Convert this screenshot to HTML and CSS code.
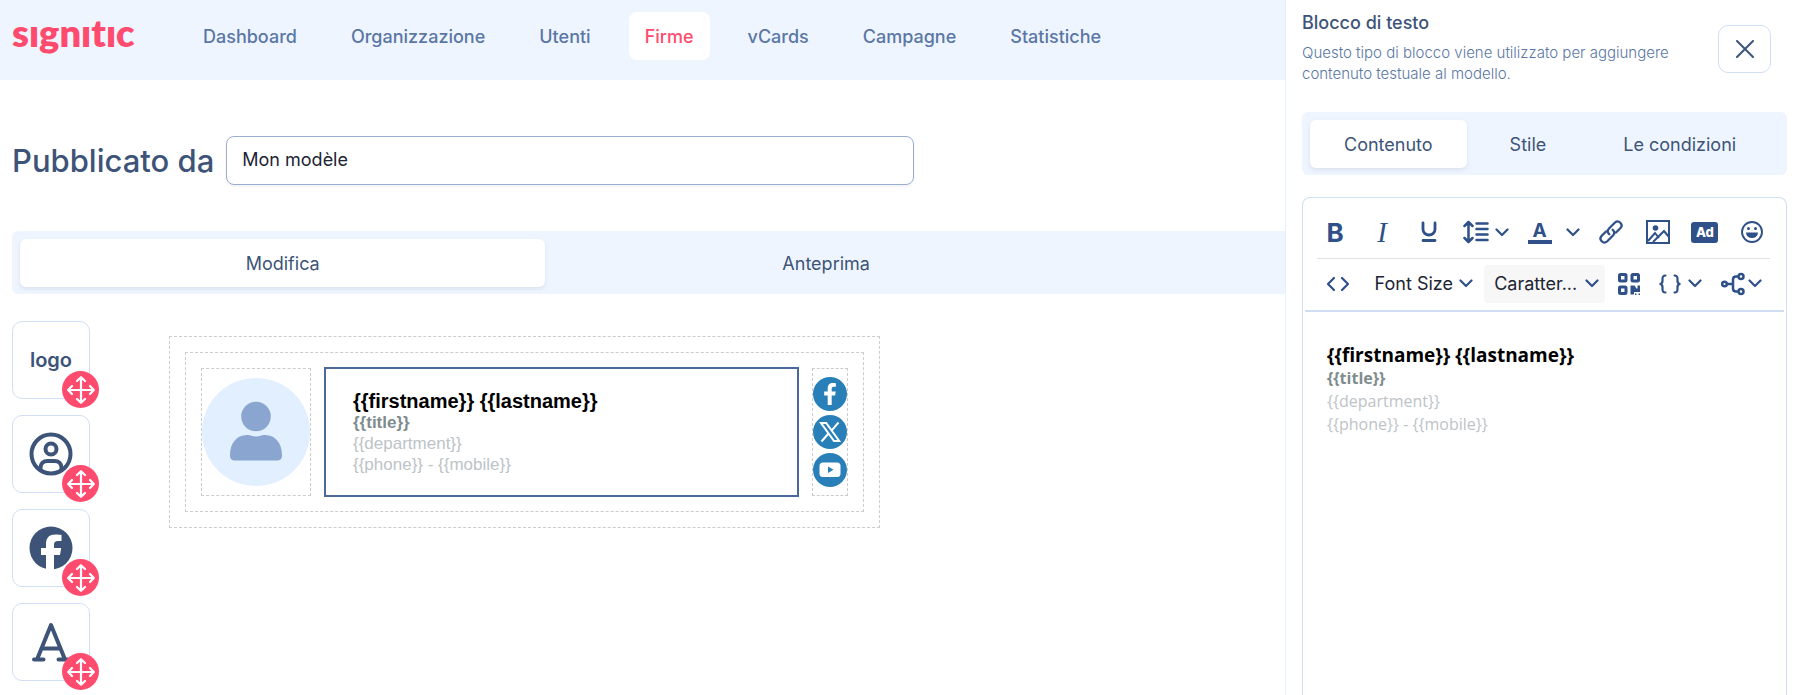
FILE: index.html
```
<!DOCTYPE html>
<html lang="it">
<head>
  <meta charset="UTF-8">
  <meta name="viewport" content="width=device-width, initial-scale=1">
  <title>Signitic - Firme</title>
  <link rel="stylesheet" href="styles.css">
</head>
<body>
  <!-- shared icons -->
  <svg class="sprite" aria-hidden="true">
    <symbol id="chevron" viewBox="0 0 14 9">
      <path d="M1.5 1.5 7 7l5.500-5.500" fill="none" stroke="currentColor" stroke-width="2.200" stroke-linecap="round" stroke-linejoin="round"/>
    </symbol>
    <symbol id="move" viewBox="0 0 28 28">
      <path d="M14 1.500v25M1.500 14h25M10 5l4-3.800L18 5M10 23l4 3.800 4-3.800M5 10l-3.800 4L5 18M23 10l3.800 4-3.800 4" fill="none" stroke="currentColor" stroke-width="2.200" stroke-linecap="round" stroke-linejoin="round"/>
    </symbol>
  </svg>

  <div class="app">
    <div class="page">
      <header class="topbar">
        <a href="#" class="logo" aria-label="signitic">sıgnıtıc</a>
        <nav class="nav">
          <a href="#">Dashboard</a>
          <a href="#">Organizzazione</a>
          <a href="#">Utenti</a>
          <a href="#" class="active">Firme</a>
          <a href="#">vCards</a>
          <a href="#">Campagne</a>
          <a href="#">Statistiche</a>
        </nav>
      </header>

      <main class="main">
        <div class="title-row">
          <label for="modelName">Pubblicato da</label>
          <input type="text" id="modelName" value="Mon modèle">
        </div>

        <div class="tabs main-tabs">
          <button type="button" class="tab active">Modifica</button>
          <button type="button" class="tab">Anteprima</button>
        </div>

        <div class="workspace">
          <div class="blocks">
            <button type="button" class="block">
              <span>logo</span>
              <span class="badge"><svg><use href="#move"/></svg></span>
            </button>
            <button type="button" class="block" aria-label="Foto">
              <svg class="block-icon" viewBox="0 0 44 44" fill="none" stroke="currentColor" stroke-width="4">
                <circle cx="22" cy="22" r="19.500"/>
                <circle cx="22" cy="17" r="5.500"/>
                <path d="M11.500 38v-2c0-4.500 3-7 7-7h7c4 0 7 2.500 7 7v2"/>
              </svg>
              <span class="badge"><svg><use href="#move"/></svg></span>
            </button>
            <button type="button" class="block" aria-label="Social">
              <svg class="block-icon" viewBox="0 0 44 44">
                <circle cx="22" cy="22" r="21.500" fill="currentColor"/>
                <path d="M17 44V29h-5v-7h5v-4c0-6.500 3.500-9.500 9.500-9.500 2.500 0 4.500.2 6 .5v6h-3.500c-3 0-4 1.300-4 3.500V22h7.200l-1.200 7h-6v15z" fill="#fff"/>
              </svg>
              <span class="badge"><svg><use href="#move"/></svg></span>
            </button>
            <button type="button" class="block" aria-label="Testo">
              <svg class="block-icon" viewBox="0 0 44 44" fill="none" stroke="currentColor" stroke-width="4" stroke-linecap="round" stroke-linejoin="round">
                <path d="M8 39.500 22 5l14 34.500M12.500 28.500h19M5 39.500h9.500M29.500 39.500H39"/>
              </svg>
              <span class="badge"><svg><use href="#move"/></svg></span>
            </button>
          </div>

          <div class="canvas">
            <div class="canvas-row">
              <div class="cell avatar">
                <svg viewBox="0 0 108 108">
                  <circle cx="54" cy="54" r="54" fill="#e1efff"/>
                  <circle cx="54" cy="38.500" r="14.800" fill="#8aa6d0"/>
                  <path d="M28 77c0-11 6-20 17-20 4 0 5 1.500 9 1.500s5-1.500 9-1.500c11 0 17 9 17 20 0 4-1.500 5.500-5.500 5.500h-41C29.500 82.500 28 81 28 77z" fill="#8aa6d0"/>
                </svg>
              </div>
              <div class="cell text-cell signature">
                <p class="name">{{firstname}} {{lastname}}</p>
                <p class="job">{{title}}</p>
                <p>{{department}}</p>
                <p>{{phone}} - {{mobile}}</p>
              </div>
              <div class="cell social">
                <svg viewBox="0 0 34 34">
                  <circle cx="17" cy="17" r="17" fill="#2980b9"/>
                  <path d="M14.700 28V18.500h-3.500v-4h3.500v-3c0-3.700 2-5.500 5.200-5.500 1.200 0 2.200.1 3 .3v3.500h-2c-1.700 0-2.200.8-2.200 2.200v2.500h4l-.6 4h-3.400V28z" fill="#fff"/>
                </svg>
                <svg viewBox="0 0 34 34">
                  <circle cx="17" cy="17" r="17" fill="#2980b9"/>
                  <path d="M8 8h5.200l13 18H21zM25.500 7.500 18.500 15.700M15.500 18.500 8.500 26.500" fill="none" stroke="#fff" stroke-width="2"/>
                </svg>
                <svg viewBox="0 0 34 34">
                  <circle cx="17" cy="17" r="17" fill="#2980b9"/>
                  <rect x="6.500" y="9.500" width="21" height="14.500" rx="3.500" fill="#fff"/>
                  <path d="m15 13.500 5.500 3.200L15 20z" fill="#2980b9"/>
                </svg>
              </div>
            </div>
          </div>
        </div>
      </main>
    </div>

    <aside class="panel">
      <div class="panel-head">
        <div class="panel-intro">
          <h2>Blocco di testo</h2>
          <p>Questo tipo di blocco viene utilizzato per aggiungere contenuto testuale al modello.</p>
        </div>
        <button type="button" class="close" aria-label="Chiudi">
          <svg viewBox="0 0 18 18"><path d="m1 1 16 16M17 1 1 17" stroke="currentColor" stroke-width="2" stroke-linecap="round"/></svg>
        </button>
      </div>

      <div class="tabs panel-tabs">
        <button type="button" class="tab active">Contenuto</button>
        <button type="button" class="tab">Stile</button>
        <button type="button" class="tab">Le condizioni</button>
      </div>

      <div class="editor">
        <div class="toolbar">
          <div class="tools">
            <button type="button" class="bold" aria-label="Grassetto">B</button>
            <button type="button" class="italic" aria-label="Corsivo">I</button>
            <button type="button" aria-label="Sottolineato">
              <svg class="ico" viewBox="0 0 24 24" fill="none" stroke="currentColor" stroke-width="2.800" stroke-linecap="round"><path d="M6 3v6.500a6 5.500 0 0 0 12 0V3M6 20.500h12"/></svg>
            </button>
            <button type="button" class="wide" aria-label="Interlinea">
              <svg class="ico line-ico" viewBox="0 0 26 24" fill="none" stroke="currentColor" stroke-width="2.500" stroke-linecap="round" stroke-linejoin="round"><path d="M5.500 3v18M1.500 6l4-4 4 4M1.500 18l4 4 4-4M13.500 3.500h11M13.500 9h11M13.500 14.500h11M13.500 20h11"/></svg>
              <svg class="chev"><use href="#chevron"/></svg>
            </button>
            <button type="button" class="wide color" aria-label="Colore">
              <span class="color-letter">A</span>
              <svg class="chev"><use href="#chevron"/></svg>
            </button>
            <button type="button" aria-label="Link">
              <svg class="ico" viewBox="0 0 24 24" fill="none" stroke="currentColor" stroke-width="2.300" stroke-linecap="round"><path d="M10.300 14.300c-2-2-1.800-4.300-.3-5.800l6-6a3.900 3.900 0 0 1 5.500 5.500L17 12.500M13.700 9.700c2 2 1.800 4.300.3 5.800l-6 6A3.900 3.900 0 0 1 2.500 16L7 11.500"/></svg>
            </button>
            <button type="button" aria-label="Immagine">
              <svg class="ico" viewBox="0 0 24 24" fill="none" stroke="currentColor" stroke-width="2"><path d="M1 1h22v22H1zM2 21l7-8 4 5M7 22l11-11 5 6"/><circle cx="9.500" cy="8" r="2.800" fill="currentColor" stroke="none"/></svg>
            </button>
            <button type="button" aria-label="Banner"><span class="ad">Ad</span></button>
            <button type="button" aria-label="Emoji">
              <svg class="ico" viewBox="0 0 24 24"><circle cx="12" cy="12" r="10" fill="none" stroke="currentColor" stroke-width="1.900"/><circle cx="8.500" cy="8.500" r="1.500" fill="currentColor"/><circle cx="15.500" cy="8.500" r="1.500" fill="currentColor"/><path d="M6 12.500h12a6 5.500 0 0 1-12 0z" fill="currentColor"/></svg>
            </button>
          </div>
          <div class="tools">
            <button type="button" class="code" aria-label="Codice">
              <svg class="ico" viewBox="0 0 24 24" fill="none" stroke="currentColor" stroke-width="2.200" stroke-linecap="round" stroke-linejoin="round"><path d="m8 6-6 6 6 6M16 6l6 6-6 6"/></svg>
            </button>
            <div class="select size">
              <select aria-label="Dimensione"><option>Font Size</option></select>
              <svg class="chev"><use href="#chevron"/></svg>
            </div>
            <div class="select family">
              <select aria-label="Carattere"><option>Caratter...</option></select>
              <svg class="chev"><use href="#chevron"/></svg>
            </div>
            <button type="button" aria-label="QR code">
              <svg class="ico" viewBox="0 0 24 24"><g fill="none" stroke="currentColor" stroke-width="3"><rect x="2.500" y="2.500" width="6.500" height="6.500" rx="1"/><rect x="15" y="2.500" width="6.500" height="6.500" rx="1"/><rect x="2.500" y="15" width="6.500" height="6.500" rx="1"/></g><path d="M13.500 13.500h4l2 3h1v-3H23V20h-6v2.500h-3.500zM18 21.500h1.500V23H18zM21.500 21.500H23V23h-1.500z" fill="currentColor"/></svg>
            </button>
            <button type="button" class="wide" aria-label="Variabili">
              <svg class="ico" viewBox="0 0 24 24" fill="none" stroke="currentColor" stroke-width="2.200" stroke-linecap="round"><path d="M7.500 3.500C5 3.500 4.500 4.500 4.500 7v2c0 2-.5 3-3 3 2.500 0 3 1 3 3v2c0 2.500.5 3.500 3 3.500M16.500 3.500c2.500 0 3 1 3 3.500v2c0 2 .5 3 3 3-2.500 0-3 1-3 3v2c0 2.500-.5 3.500-3 3.500"/></svg>
              <svg class="chev"><use href="#chevron"/></svg>
            </button>
            <button type="button" class="wide branch" aria-label="Condizioni">
              <svg class="ico" viewBox="0 0 24 24" fill="none" stroke="currentColor" stroke-width="2.500"><circle cx="3.500" cy="12" r="2.300"/><circle cx="20" cy="4.500" r="2.500"/><circle cx="20" cy="19.500" r="2.500"/><path d="M6 12h6M17.500 4.500H15c-2 0-3 1-3 3v9c0 2 1 3 3 3h2.500"/></svg>
              <svg class="chev"><use href="#chevron"/></svg>
            </button>
          </div>
        </div>
        <div class="editor-body signature" contenteditable="true" spellcheck="false">
          <p class="name">{{firstname}} {{lastname}}</p>
          <p class="job">{{title}}</p>
          <p>{{department}}</p>
          <p>{{phone}} - {{mobile}}</p>
        </div>
      </div>
    </aside>
  </div>
</body>
</html>
```
FILE: styles.css
```
* {
  box-sizing: border-box;
}

body {
  margin: 0;
  font-family: Inter, "Liberation Sans", sans-serif;
  font-size: 18px;
  color: #3d5478;
  background: #fff;
}

h2, p {
  margin: 0;
}

a {
  color: inherit;
  text-decoration: none;
}

button, input, select {
  font: inherit;
  color: inherit;
}

button {
  padding: 0;
  border: none;
  background: none;
  cursor: pointer;
}

.sprite {
  display: none;
}

.app {
  display: flex;
  height: 100vh;
  overflow: hidden;
}

.page {
  flex: 1;
  min-width: 0;
}

/* header */
.topbar {
  display: flex;
  align-items: flex-start;
  height: 80px;
  padding: 12px;
  background: #eff5ff;
}

.logo {
  width: 175px;
  font-family: Lato, sans-serif;
  font-size: 38px;
  line-height: 40px;
  font-weight: 800;
  font-variant-ligatures: none;
  color: #ff4b6e;
}

.nav {
  display: flex;
  gap: 22px;
}

.nav a {
  padding: 1px 16px 0;
  line-height: 47px;
  font-weight: 500;
  color: #5a77a5;
  border-radius: 8px;
}

.nav a.active {
  color: #ff4b6e;
  background: #fff;
}

.main {
  padding: 56px 0 0 12px;
}

.title-row {
  display: flex;
  align-items: center;
  gap: 12px;
}

.title-row label {
  font-size: 31px;
  font-weight: 500;
}

.title-row input {
  width: 54%;
  height: 49px;
  padding: 0 15px 2px;
  border: 1px solid #9aaed3;
  border-radius: 8px;
  color: #1d2433;
  box-shadow: 0 2px 3px rgba(0, 0, 0, 0.05);
}

/* tabs */
.tabs {
  display: flex;
  gap: 18px;
  margin-top: 46px;
  padding: 8px 8px 7px;
  background: #eff5ff;
  border-radius: 6px;
}

.main-tabs {
  border-radius: 6px 0 0 6px;
}

.tab {
  flex: 0 0 41.8%;
  height: 48px;
  border-radius: 6px;
}

.tab.active {
  background: #fff;
  box-shadow: 0 2px 4px rgba(61, 84, 120, 0.12);
}

/* workspace */
.workspace {
  display: flex;
  align-items: flex-start;
  gap: 79px;
  margin-top: 27px;
}

.blocks {
  display: flex;
  flex-direction: column;
  gap: 16px;
}

.block {
  position: relative;
  display: flex;
  align-items: center;
  justify-content: center;
  width: 78px;
  height: 78px;
  border: 1px solid #d0dff5;
  border-radius: 10px;
  font-size: 20px;
  font-weight: 600;
}

.block-icon {
  width: 44px;
  height: 44px;
}

.badge {
  position: absolute;
  right: -10px;
  bottom: -10px;
  display: flex;
  align-items: center;
  justify-content: center;
  width: 37px;
  height: 37px;
  border-radius: 50%;
  color: #fff;
  background: #ff4b6e;
}

.badge svg {
  width: 28px;
  height: 28px;
}

.canvas {
  width: 711px;
  margin-top: 15px;
  padding: 15px;
  border: 1px dashed #ccc;
}

.canvas-row {
  display: flex;
  gap: 14px;
  padding: 15px;
  border: 1px dashed #ccc;
}

.cell {
  height: 128px;
  border: 1px dashed #ccc;
}

.avatar {
  display: flex;
  align-items: center;
  width: 110px;
}

.avatar svg {
  width: 108px;
  height: 108px;
}

.text-cell {
  flex: 1;
  padding: 21px 27px;
  border: 1px solid #4a6899;
  outline: 1px solid #4a6899;
  font-family: "Liberation Sans", Arial, sans-serif;
  line-height: 21px;
}

.signature {
  color: #bdc3c7;
}

.signature .name {
  color: #000;
  font-weight: bold;
}

.signature .job {
  color: #7f8c8d;
  font-weight: bold;
}

.text-cell p {
  font-size: 17px;
}

.text-cell .name {
  font-size: 20px;
  line-height: 22px;
}

.social {
  display: flex;
  flex-direction: column;
  align-items: center;
  justify-content: center;
  gap: 4px;
  width: 36px;
}

.social svg {
  width: 34px;
  height: 34px;
}

/* side panel */
.panel {
  display: flex;
  flex-direction: column;
  width: 514px;
  padding: 11px 12px 0 16px;
  border-left: 1px solid #e6effc;
}

.panel-head {
  display: flex;
  justify-content: space-between;
  padding-right: 16px;
}

.panel-intro {
  width: 380px;
}

.panel h2 {
  font-size: 18px;
  line-height: 24px;
  font-weight: 500;
}

.panel-intro p {
  margin-top: 7px;
  font-size: 15px;
  line-height: 21px;
  font-weight: 300;
  color: #5a77a5;
}

.close {
  width: 53px;
  height: 48px;
  margin-top: 14px;
  border: 1px solid #d0dff5;
  border-radius: 10px;
}

.close svg {
  display: block;
  width: 18px;
  height: 18px;
  margin: 0 auto;
}

.panel-tabs {
  gap: 9px;
  margin-top: 28px;
}

.panel-tabs .tab {
  flex: none;
  padding: 0 34px;
}

/* text editor */
.editor {
  flex: 1;
  margin-top: 22px;
  border: 1px solid #d0dff5;
  border-bottom: none;
  border-radius: 8px 8px 0 0;
}

.toolbar {
  margin: 0 2px;
  padding: 8px 14px 2px 12px;
  border-bottom: 2px solid #d0ddf2;
  color: #2f5088;
}

.tools {
  display: flex;
  align-items: center;
  justify-content: space-between;
  height: 52px;
}

.tools + .tools {
  height: 50px;
  border-top: 1px solid #dfe1e5;
}

.tools button {
  display: flex;
  align-items: center;
  justify-content: center;
  gap: 6px;
  width: 36px;
  height: 38px;
}

.tools .wide {
  width: 56px;
}

.tools .color {
  gap: 14px;
}

.tools .branch {
  gap: 3px;
}

.tools .code {
  width: 42px;
}

.ico {
  flex: none;
  width: 24px;
  height: 24px;
}

.line-ico {
  width: 26px;
}

.chev {
  flex: none;
  width: 14px;
  height: 9px;
}

.bold {
  font-size: 26px;
  font-weight: 700;
}

.italic {
  font-family: "Liberation Serif", serif;
  font-size: 29px;
  font-style: italic;
}

.color-letter {
  width: 24px;
  border-bottom: 4px solid #2f5088;
  font-size: 19px;
  line-height: 19px;
  font-weight: 700;
}

.ad {
  width: 27px;
  border-radius: 3px;
  color: #fff;
  background: #2f5088;
  font-size: 13px;
  line-height: 21px;
  font-weight: 800;
}

.select {
  display: grid;
  align-items: center;
  height: 38px;
  border-radius: 4px;
}

.select > * {
  grid-area: 1 / 1;
}

.select select {
  height: 38px;
  padding: 0 0 0 10px;
  border: none;
  background: none;
  appearance: none;
  color: #1d2433;
}

.select .chev {
  justify-self: end;
  margin-right: 6px;
  pointer-events: none;
}

.size {
  width: 114px;
}

.family {
  width: 121px;
  background: #f7f7f7;
}

.editor-body {
  padding: 31px 24px;
  font-family: "Open Sans", "Noto Sans", sans-serif;
  font-size: 16px;
  line-height: 23px;
  outline: none;
}

.editor-body .name {
  font-size: 19px;
  line-height: 24px;
}
```
